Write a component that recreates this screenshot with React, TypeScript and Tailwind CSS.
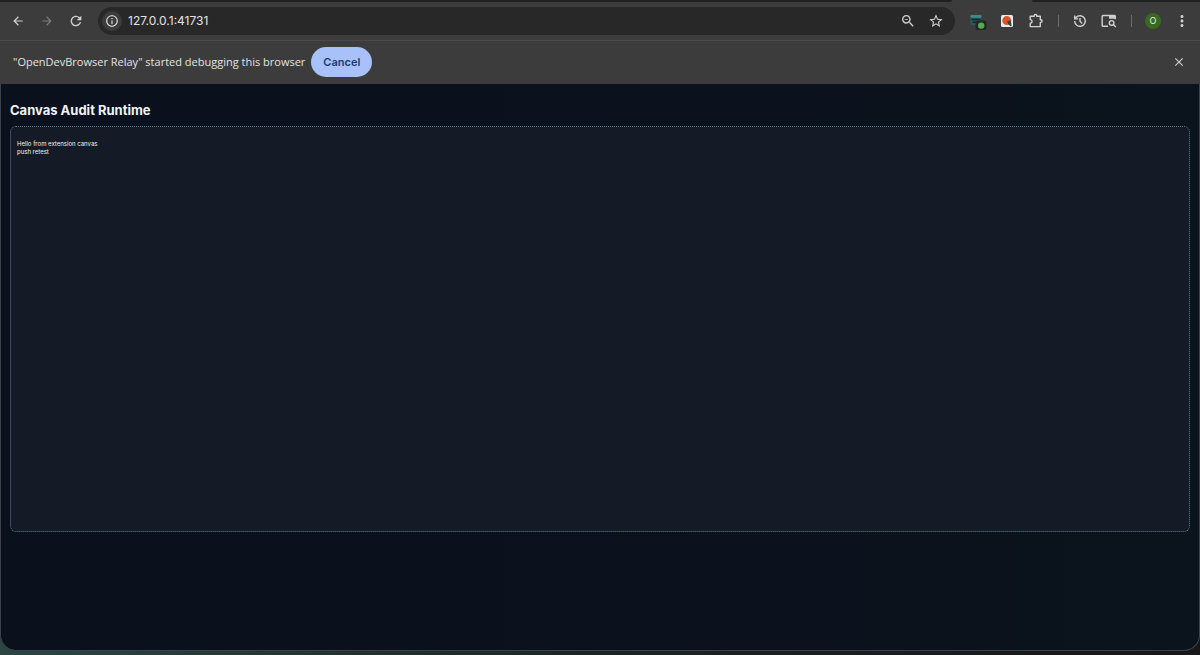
import { ReactNode } from 'react';
import {
  MdArrowBack,
  MdArrowForward,
  MdClose,
  MdMoreVert,
  MdOutlineInfo,
  MdRefresh,
  MdStarBorder,
  MdZoomOut,
} from 'react-icons/md';

interface IconButtonProps {
  label: string;
  className?: string;
  children: ReactNode;
}

function IconButton({ label, className = 'text-[#d0d0d0]', children }: IconButtonProps) {
  return (
    <button
      type="button"
      aria-label={label}
      className={`flex h-7 w-7 shrink-0 items-center justify-center ${className}`}
    >
      {children}
    </button>
  );
}

function Separator() {
  return (
    <div className="flex w-3.5 shrink-0 justify-center">
      <div className="h-3 w-px bg-[#6b6b6b]" />
    </div>
  );
}

function RelayIcon() {
  return (
    <svg width="18" height="18" viewBox="0 0 18 18">
      <rect x="1.5" y="3" width="11" height="10" rx="1" fill="#2b5a60" />
      <rect x="1.5" y="3" width="11" height="2.8" rx="1" fill="#3c8c8c" />
      <path d="M2.5 7.5h9M3.5 10.3h4" stroke="#12262c" strokeWidth="1.6" />
      <rect x="6.5" y="8.5" width="11" height="9.5" rx="2.5" fill="#262626" />
      <circle cx="12.2" cy="13.6" r="3.2" fill="#4cb050" />
    </svg>
  );
}

function RecorderIcon() {
  return (
    <svg width="14" height="14" viewBox="0 0 14 14">
      <rect x="1" y="1" width="12" height="12" rx="1.5" fill="#e4f0ee" />
      <circle cx="6.8" cy="6.6" r="4.5" fill="#d9542e" />
      <path d="M7 7.5 10.9 6.6 11.6 12 10.4 12.2 8.6 10.6z" fill="#37423a" />
    </svg>
  );
}

function ExtensionsIcon() {
  return (
    <svg width="16" height="16" viewBox="0 0 16 16" fill="none" stroke="currentColor" strokeWidth="1.4">
      <path
        d="M2.2 3.2h4v-.4a1.3 1.3 0 0 1 2.6 0v.4h3.5v3.6h.5a1.3 1.3 0 0 1 0 2.6h-.5v4.2H2.2v-3.4a1.8 1.8 0 0 0 0-3.6z"
        strokeLinejoin="round"
      />
    </svg>
  );
}

function HistoryIcon() {
  return (
    <svg width="14" height="14" viewBox="0 0 14 14" fill="none" stroke="currentColor" strokeWidth="1.4">
      <path d="M1.7 7A5.3 5.3 0 1 0 3.2 3.3L1.8 4.8" />
      <path d="M1.7 1.5v3.4h3.4" />
      <path d="M7 4v3.2l2.2 2.2" />
    </svg>
  );
}

function TabSearchIcon() {
  return (
    <svg width="16" height="14" viewBox="0 0 16 14" fill="none" stroke="currentColor" strokeWidth="1.4">
      <path d="M7 12.3H2a.8.8 0 0 1-.8-.8V2.3a.8.8 0 0 1 .8-.8h11.5a.8.8 0 0 1 .8.8v2.9" />
      <path d="M8 1.5h6.3v3.2H8z" fill="currentColor" stroke="none" />
      <circle cx="10.6" cy="8.9" r="2.3" />
      <path d="m12.3 10.6 2.5 2.5" />
    </svg>
  );
}

function TabStrip() {
  return (
    <div className="flex h-0.5 bg-[#3c3c3c]">
      <div className="flex-1 rounded-br bg-[#1f2020]" />
      <div className="w-20" />
      <div className="w-42 rounded-bl bg-[#1f2020]" />
    </div>
  );
}

function Toolbar() {
  return (
    <div className="flex items-center gap-px border-b border-[#4a4a4a] px-1 py-[5px]">
      <IconButton label="Back">
        <MdArrowBack size={14} />
      </IconButton>
      <IconButton label="Forward" className="text-[#7c7c7c]">
        <MdArrowForward size={14} />
      </IconButton>
      <IconButton label="Reload">
        <MdRefresh size={16} />
      </IconButton>

      <div className="mr-2 ml-[7px] flex h-7 flex-1 items-center rounded-full bg-[#282828] pr-[5px] pl-1">
        <button
          type="button"
          aria-label="View site information"
          className="flex h-5 w-5 items-center justify-center rounded-full bg-[#3c3c3c] text-[#dedede]"
        >
          <MdOutlineInfo size={14} />
        </button>
        <input
          type="text"
          aria-label="Address"
          defaultValue="127.0.0.1:41731"
          className="min-w-0 flex-1 bg-transparent px-1.5 text-xs text-[#e3e3e3] outline-none"
        />
        <IconButton label="Zoom">
          <MdZoomOut size={16} />
        </IconButton>
        <IconButton label="Bookmark this tab">
          <MdStarBorder size={16} />
        </IconButton>
      </div>

      <IconButton label="Relay">
        <RelayIcon />
      </IconButton>
      <IconButton label="Recorder">
        <RecorderIcon />
      </IconButton>
      <IconButton label="Extensions">
        <ExtensionsIcon />
      </IconButton>
      <Separator />
      <IconButton label="History">
        <HistoryIcon />
      </IconButton>
      <IconButton label="Search tabs">
        <TabSearchIcon />
      </IconButton>
      <Separator />
      <button type="button" className="flex h-7 w-7 shrink-0 items-center justify-center">
        <span className="flex h-4 w-4 items-center justify-center rounded-full bg-[#38691e] text-[9px] text-[#e6f0e0]">
          O
        </span>
      </button>
      <IconButton label="Menu">
        <MdMoreVert size={18} />
      </IconButton>
    </div>
  );
}

function DebugBar() {
  return (
    <div className="flex items-center pt-1.5 pr-[7px] pb-[7px] pl-[13px]">
      <p className="font-['Open_Sans',sans-serif] text-[11px] font-medium text-[#e3e3e3]">
        "OpenDevBrowser Relay" started debugging this browser
      </p>
      <button
        type="button"
        className="ml-1.5 h-[30px] rounded-full bg-[#a8c1f8] px-3 text-[11px] font-semibold text-[#1b3a78]"
      >
        Cancel
      </button>
      <div className="flex-1" />
      <IconButton label="Close">
        <MdClose size={14} />
      </IconButton>
    </div>
  );
}

export default function App() {
  return (
    <div className="flex min-h-screen flex-col bg-linear-to-r from-[#2b4643] via-[#1c2424] to-[#171717] pb-1 font-['Inter',sans-serif]">
      <div className="flex flex-1 flex-col overflow-hidden rounded-b-2xl bg-[#3c3c3c]">
        <TabStrip />
        <Toolbar />
        <DebugBar />
        <main className="flex-1 rounded-b-2xl border border-t-0 border-[#3a424b] bg-linear-to-r from-[#0a101c] to-[#0b131d] px-[9px] pt-[18px]">
          <h1 className="text-[13px] leading-4 font-bold text-[#eef4fb]">Canvas Audit Runtime</h1>
          <section className="mt-2 min-h-[62vh] rounded-md border border-dotted border-[#5b8189] bg-[#141b26] px-1.5 py-[13px]">
            <p className="w-24 text-[6px] leading-2 text-[#f0f3f7]">Hello from extension canvas push retest</p>
          </section>
        </main>
      </div>
    </div>
  );
}
